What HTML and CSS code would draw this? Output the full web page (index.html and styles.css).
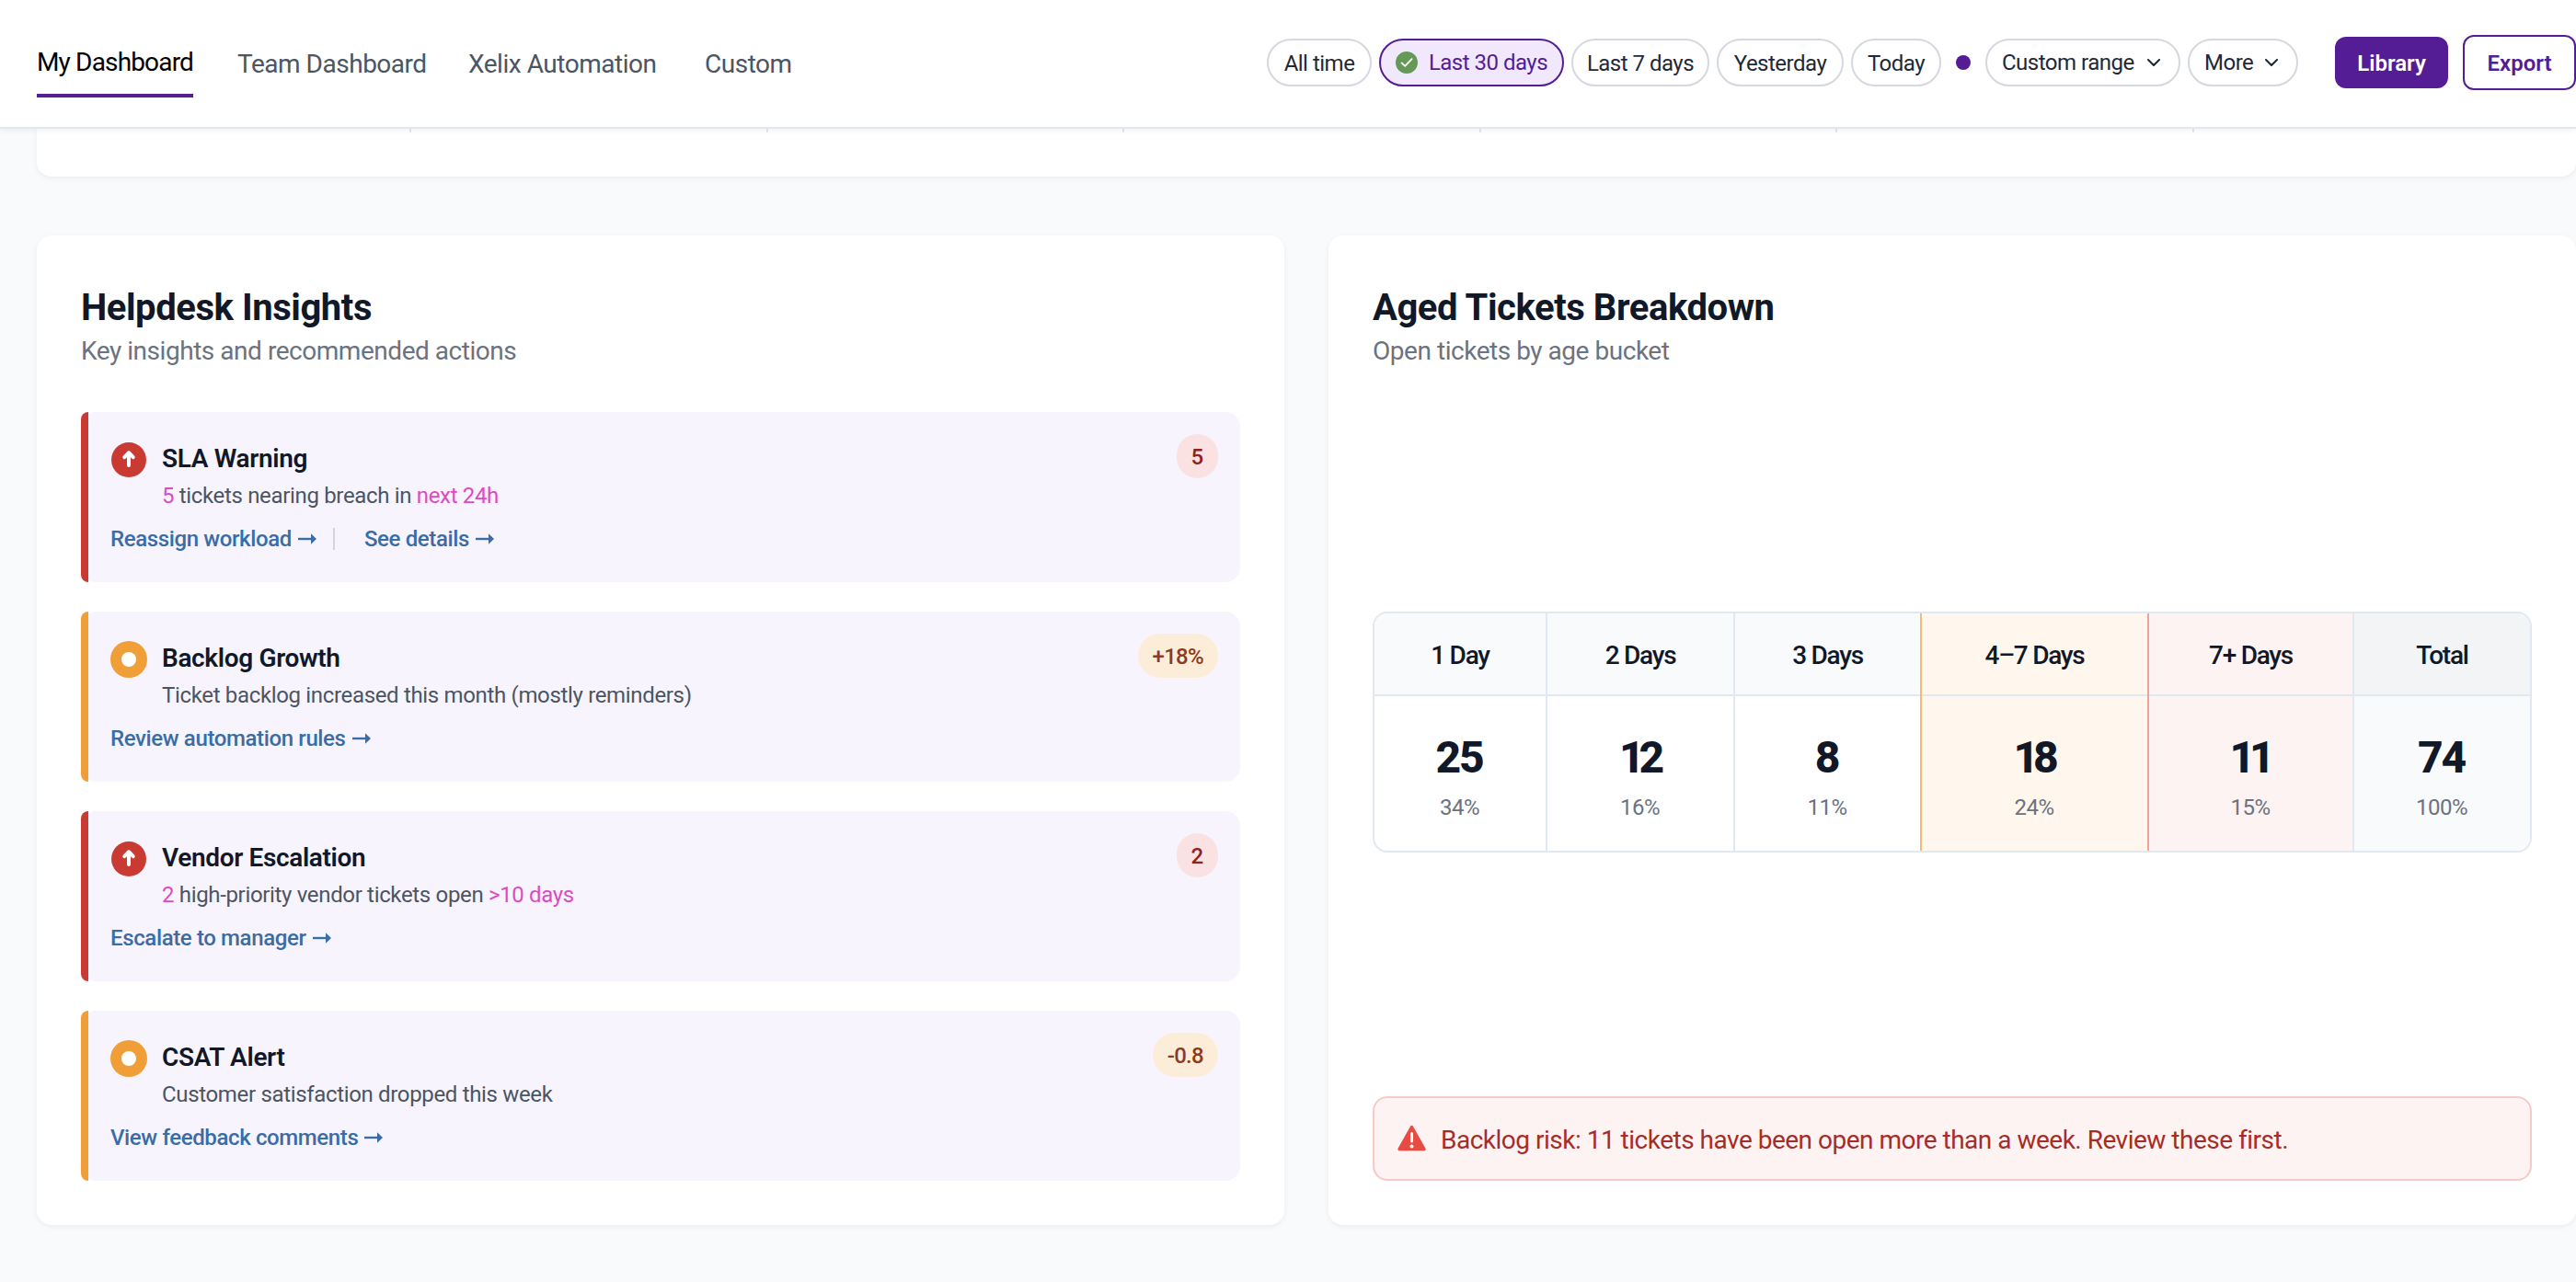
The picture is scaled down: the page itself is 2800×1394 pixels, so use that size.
FILE: index.html
```html
<!DOCTYPE html>
<html lang="en">
<head>
  <meta charset="UTF-8" />
  <meta name="viewport" content="width=device-width, initial-scale=1.0"/>
  <title>My Dashboard</title>
  <link rel="stylesheet" href="styles.css">
</head>
<body>

  <!-- Shared icons -->
  <svg class="sprite">
    <symbol id="arrow" viewBox="0 0 20 12">
      <path d="M0 6h15" stroke="currentColor" stroke-width="2.4"/>
      <path d="M14 .2 20 6l-6 5.8z" fill="currentColor"/>
    </symbol>
    <symbol id="chevron" viewBox="0 0 14 8">
      <path d="M1 1l6 6 6-6" fill="none" stroke="currentColor" stroke-width="2" stroke-linecap="round" stroke-linejoin="round"/>
    </symbol>
    <symbol id="critical" viewBox="0 0 40 40">
      <circle cx="20" cy="20" r="19" fill="#c93a32"/>
      <path d="M20 26V13M15.3 17.2l4.7-5 4.7 5" fill="none" stroke="#fff" stroke-width="4" stroke-linecap="round" stroke-linejoin="round"/>
    </symbol>
    <symbol id="warning" viewBox="0 0 40 40">
      <circle cx="20" cy="20" r="20" fill="#f09f38"/>
      <circle cx="20" cy="20" r="8" fill="#fff"/>
    </symbol>
  </svg>

  <!-- Top bar -->
  <header class="topbar">
    <nav class="tabs">
      <a class="tab active">My Dashboard</a>
      <a class="tab">Team Dashboard</a>
      <a class="tab">Xelix Automation</a>
      <a class="tab">Custom</a>
    </nav>
    <div class="filters">
      <button class="chip">All time</button>
      <button class="chip selected">
        <svg width="24" height="24" viewBox="0 0 24 24">
          <circle cx="12" cy="12" r="12" fill="#659957"/>
          <path d="M6.6 12.4l3.6 3.4 7.4-7.6" fill="none" stroke="#fff" stroke-width="1.8" stroke-linecap="round" stroke-linejoin="round"/>
        </svg>
        <span>Last 30 days</span>
      </button>
      <button class="chip">Last 7 days</button>
      <button class="chip">Yesterday</button>
      <button class="chip">Today</button>
      <span class="dot"></span>
      <button class="chip menu"><span>Custom range</span> <svg width="14" height="8"><use href="#chevron"/></svg></button>
      <button class="chip menu"><span>More</span> <svg width="14" height="8"><use href="#chevron"/></svg></button>
    </div>
    <div class="actions">
      <button class="btn btn-primary">Library</button>
      <button class="btn btn-outline">Export</button>
    </div>
  </header>

  <main>
    <!-- Bottom of the stats strip -->
    <section class="card stats">
      <div></div><div></div><div></div><div></div><div></div><div></div><div></div>
    </section>

    <div class="panels">
      <section class="card panel">
        <div class="panel-head">
          <h2>Helpdesk Insights</h2>
          <p>Key insights and recommended actions</p>
        </div>
        <div class="insights">
          <article class="insight critical">
            <div class="insight-top">
              <svg width="40" height="40"><use href="#critical"/></svg>
              <div class="insight-text">
                <h3>SLA Warning</h3>
                <p><em>5</em> tickets nearing breach in <em>next 24h</em></p>
              </div>
              <span class="badge">5</span>
            </div>
            <div class="links">
              <a>Reassign workload <svg width="20" height="12"><use href="#arrow"/></svg></a>
              <a>See details <svg width="20" height="12"><use href="#arrow"/></svg></a>
            </div>
          </article>

          <article class="insight warning">
            <div class="insight-top">
              <svg width="40" height="40"><use href="#warning"/></svg>
              <div class="insight-text">
                <h3>Backlog Growth</h3>
                <p>Ticket backlog increased this month (mostly reminders)</p>
              </div>
              <span class="badge">+18%</span>
            </div>
            <div class="links">
              <a>Review automation rules <svg width="20" height="12"><use href="#arrow"/></svg></a>
            </div>
          </article>

          <article class="insight critical">
            <div class="insight-top">
              <svg width="40" height="40"><use href="#critical"/></svg>
              <div class="insight-text">
                <h3>Vendor Escalation</h3>
                <p><em>2</em> high-priority vendor tickets open <em>&gt;10 days</em></p>
              </div>
              <span class="badge">2</span>
            </div>
            <div class="links">
              <a>Escalate to manager <svg width="20" height="12"><use href="#arrow"/></svg></a>
            </div>
          </article>

          <article class="insight warning">
            <div class="insight-top">
              <svg width="40" height="40"><use href="#warning"/></svg>
              <div class="insight-text">
                <h3>CSAT Alert</h3>
                <p>Customer satisfaction dropped this week</p>
              </div>
              <span class="badge">-0.8</span>
            </div>
            <div class="links">
              <a>View feedback comments <svg width="20" height="12"><use href="#arrow"/></svg></a>
            </div>
          </article>
        </div>
      </section>

      <section class="card panel">
        <div class="panel-head">
          <h2>Aged Tickets Breakdown</h2>
          <p>Open tickets by age bucket</p>
        </div>
        <div class="aged-wrap">
          <div class="aged">
            <div class="bucket">
              <div class="bucket-head">1 Day</div>
              <div class="bucket-body"><strong>25</strong><span>34%</span></div>
            </div>
            <div class="bucket">
              <div class="bucket-head">2 Days</div>
              <div class="bucket-body"><strong class="narrow">12</strong><span>16%</span></div>
            </div>
            <div class="bucket">
              <div class="bucket-head">3 Days</div>
              <div class="bucket-body"><strong>8</strong><span>11%</span></div>
            </div>
            <div class="bucket week">
              <div class="bucket-head">4–7 Days</div>
              <div class="bucket-body"><strong class="narrow">18</strong><span>24%</span></div>
            </div>
            <div class="bucket overdue">
              <div class="bucket-head">7+ Days</div>
              <div class="bucket-body"><strong class="narrow">11</strong><span>15%</span></div>
            </div>
            <div class="bucket total">
              <div class="bucket-head">Total</div>
              <div class="bucket-body"><strong>74</strong><span>100%</span></div>
            </div>
          </div>
        </div>
        <div class="alert">
          <svg width="32" height="32" viewBox="0 0 32 32">
            <path d="M16.500 3.500L30 27.500H3z" fill="#e74c43" stroke="#e74c43" stroke-width="3.400" stroke-linejoin="round"/>
            <path d="M16.500 10.500v8.500" stroke="#fff" stroke-width="3" stroke-linecap="round"/>
            <circle cx="16.500" cy="24.500" r="2" fill="#fff"/>
          </svg>
          <span>Backlog risk: 11 tickets have been open more than a week. Review these first.</span>
        </div>
      </section>
    </div>
  </main>

</body>
</html>
```
FILE: styles.css
```css
* {
  box-sizing: border-box;
}

body {
  margin: 0;
  height: 1394px;
  overflow: hidden;
  background: #f9fafc;
  color: #111827;
  font-family: Roboto, sans-serif;
  font-size: 24px;
  letter-spacing: -0.014em;
}

h2, h3, p {
  margin: 0;
}

svg {
  display: block;
  flex-shrink: 0;
}

.sprite {
  position: absolute;
  width: 0;
  height: 0;
}

/* TOP BAR */
.topbar {
  position: relative;
  z-index: 1;
  display: flex;
  align-items: center;
  height: 140px;
  padding-left: 40px;
  background: white;
  border-bottom: 2px solid #e2e8f0;
  box-shadow: 0 2px 6px rgba(0,0,0,0.06);
}

.tabs {
  display: grid;
  grid-template-columns: 170px 203px 209px 94px;
  gap: 48px;
  align-items: center;
}

.tab {
  padding-top: 2px;
  font-size: 28px;
  font-weight: 450;
  line-height: 32px;
  letter-spacing: -0.017em;
  white-space: nowrap;
  color: #4b5563;
}

.tab.active {
  padding: 20px 0 18px;
  letter-spacing: -0.03em;
  color: black;
  border-bottom: 4px solid #541d95;
}

.filters {
  display: grid;
  grid-template-columns: 114px 201px 150px 138px 98px 32px 212px 120px;
  gap: 8px;
  align-items: center;
  margin: 0 0 2px auto;
}

.chip {
  display: flex;
  align-items: center;
  justify-content: center;
  height: 52px;
  padding: 1px 0 0;
  background: white;
  border: 2px solid #d5d8df;
  border-radius: 26px;
  color: #1f2937;
  font: 450 24px Roboto, sans-serif;
  letter-spacing: -0.021em;
  white-space: nowrap;
}

.chip.selected {
  gap: 12px;
  padding-top: 0;
  background: #f1e8fd;
  border-color: #541d95;
  color: #541d95;
}

.chip.menu {
  justify-content: space-between;
  padding: 0 20px 0 16px;
}

.dot {
  width: 16px;
  height: 16px;
  margin: 0 auto;
  border-radius: 50%;
  background: #541d95;
}

.actions {
  display: flex;
  align-items: center;
  gap: 16px;
  margin: 0 0 2px 40px;
}

.btn {
  width: 123px;
  height: 56px;
  padding: 1px 0 0;
  border: none;
  border-radius: 12px;
  font: 600 24px Roboto, sans-serif;
}

.btn-primary {
  background: #541d95;
  color: white;
}

.btn-outline {
  height: 60px;
  background: white;
  border: 2px solid #541d95;
  color: #541d95;
}

/* CARDS */
main {
  padding-left: 40px;
}

.card {
  background: white;
  border-radius: 16px;
  box-shadow: 0 2px 6px rgba(0,0,0,0.06);
}

.stats {
  display: grid;
  grid-template-columns: repeat(7, 1fr);
  height: 52px;
  margin-bottom: 64px;
  padding: 0 28px 0 20px;
  border-radius: 0 0 16px 16px;
}

.stats div {
  height: 4px;
  border-right: 2px solid #e5e7eb;
}

.stats div:last-child {
  border: none;
}

.panels {
  display: grid;
  grid-template-columns: 1fr 1fr;
  gap: 48px;
}

.panel {
  display: flex;
  flex-direction: column;
  height: 1076px;
  padding: 48px;
}

.panel-head {
  height: 96px;
  margin-bottom: 48px;
  padding-top: 1px;
}

.panel-head h2 {
  font-size: 40px;
  line-height: 60px;
  letter-spacing: -0.011em;
}

.panel-head p {
  font-size: 28px;
  line-height: 33px;
  letter-spacing: -0.0165em;
  color: #6b7280;
}

/* INSIGHTS */
.insights {
  flex: 1;
  display: grid;
  grid-template-rows: repeat(4, 1fr);
  gap: 32px;
}

.insight {
  position: relative;
  padding: 32px 24px 0 32px;
  background: #f7f4fe;
  border-radius: 16px;
}

/* coloured severity bar */
.insight::before {
  content: "";
  position: absolute;
  top: 0;
  left: 0;
  width: 8px;
  height: 100%;
  border-radius: 8px 0 0 8px;
  background: #c93a32;
}

.insight.warning::before {
  background: #f09f38;
}

.insight-top {
  display: flex;
  align-items: flex-start;
  gap: 16px;
}

.insight-text {
  flex: 1;
  padding-top: 3px;
}

.insight h3 {
  font-size: 28px;
  font-weight: 600;
  line-height: 32px;
  letter-spacing: -0.0125em;
}

.insight p {
  margin-top: 10px;
  line-height: 28px;
  color: #4b5563;
}

.insight em {
  font-style: normal;
  color: #dd4bc3;
}

.badge {
  height: 48px;
  margin-top: -8px;
  padding: 1px 16px 0;
  border-radius: 24px;
  background: #fae2e2;
  color: #8c231f;
  font-weight: 550;
  line-height: 48px;
  letter-spacing: -0.01em;
}

.warning .badge {
  background: #fcedd8;
  color: #8f3a1c;
  letter-spacing: -0.03em;
}

.links {
  display: flex;
  margin-top: 19px;
  line-height: 28px;
  font-weight: 500;
  letter-spacing: -0.0155em;
  color: #3a6ca5;
}

.links a {
  display: flex;
  align-items: center;
  gap: 7px;
}

.links a + a::before {
  content: "";
  width: 2px;
  height: 24px;
  margin: 0 25px 0 18px;
  background: #d1d5e0;
}

/* AGED TICKETS */
.aged-wrap {
  flex: 1;
  display: flex;
  align-items: center;
}

.aged {
  display: grid;
  grid-template-columns: 188px 204px 201px 247px 223px 1fr;
  width: 100%;
  height: 262px;
  overflow: hidden;
  border: 2px solid #e2e8f0;
  border-radius: 16px;
  text-align: center;
}

.bucket {
  display: flex;
  flex-direction: column;
  border-right: 2px solid #e2e8f0;
}

.bucket:nth-child(n+3) {
  border-right: none;
}

.bucket-head {
  height: 90px;
  padding-top: 3px;
  background: #f9fafc;
  border-bottom: 2px solid #e2e8f0;
  font-size: 28px;
  font-weight: 500;
  line-height: 86px;
  letter-spacing: -0.045em;
}

.bucket-body {
  flex: 1;
  padding-top: 39px;
}

.bucket strong {
  display: block;
  padding-right: 0.04em;
  font-size: 48px;
  font-weight: 800;
  line-height: 56px;
  letter-spacing: -0.045em;
}

.bucket strong.narrow {
  padding-right: 0.06em;
  letter-spacing: -0.13em;
}

.bucket span {
  display: block;
  margin-top: 10px;
  padding-right: 1px;
  line-height: 32px;
  letter-spacing: -0.02em;
  color: #6b7280;
}

.week {
  background: #fff7ed;
  border-left: 2px solid #f2bb77;
}

.overdue {
  background: #fdf3f2;
  border-left: 2px solid #efa29c;
}

.total {
  background: #f9fafc;
  border-left: 2px solid #e2e8f0;
}

.week .bucket-head,
.overdue .bucket-head {
  background: none;
}

.total .bucket-head {
  background: #f3f4f6;
}

.alert {
  display: flex;
  align-items: center;
  gap: 16px;
  height: 92px;
  margin-top: 48px;
  padding: 0 24px;
  background: #fdf3f2;
  border: 2px solid #f7caca;
  border-radius: 16px;
  color: #a52d28;
  font-size: 28px;
  letter-spacing: -0.0178em;
}

.alert span {
  padding-top: 2px;
}
```
